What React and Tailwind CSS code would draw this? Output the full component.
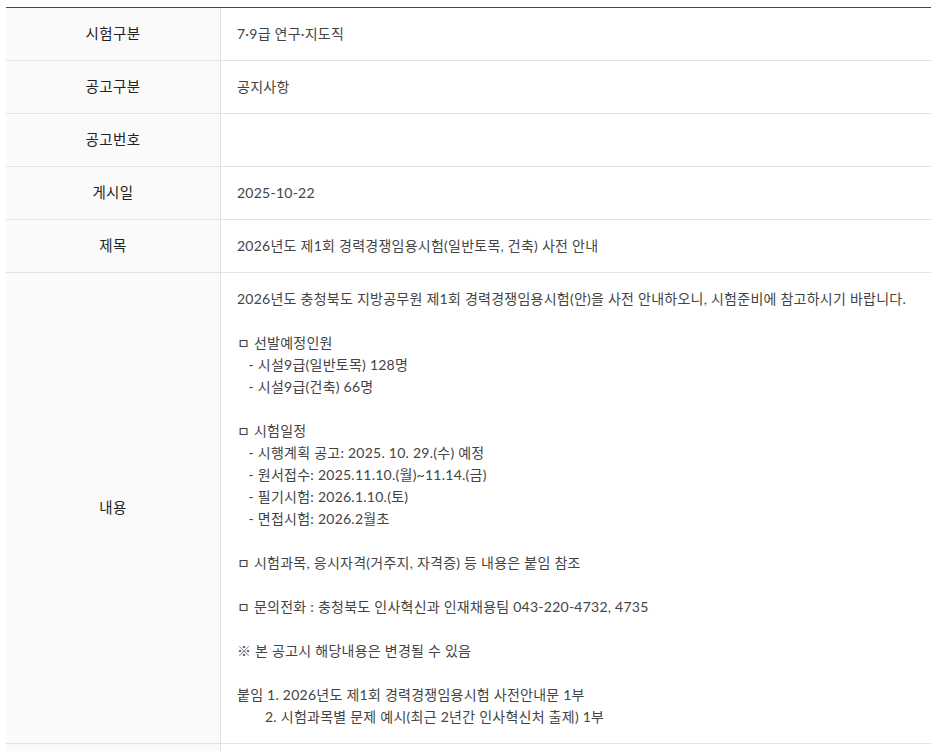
import React from "react";

const font = { fontFamily: "Lato, 'Noto Sans CJK KR', sans-serif" };

function Row({ label, children }) {
  return (
    <div className="grid grid-cols-[215px_1fr] border-b border-[#e2e2e2]">
      <div className="bg-[#fafafa] border-r border-[#e2e2e2] flex items-center justify-center text-[14.5px] font-normal tracking-[0.4px] text-[#222] leading-[22px] py-[15px]">
        {label}
      </div>
      <div className="pl-[16px] pr-[10px] py-[15px] text-[14px] tracking-[0.25px] text-[#444] leading-[22px]">
        {children}
      </div>
    </div>
  );
}

export default function App() {
  const lines = [
    "2026년도 충청북도 지방공무원 제1회 경력경쟁임용시험(안)을 사전 안내하오니, 시험준비에 참고하시기 바랍니다.",
    "",
    "ㅁ 선발예정인원",
    "   - 시설9급(일반토목) 128명",
    "   - 시설9급(건축) 66명",
    "",
    "ㅁ 시험일정",
    "   - 시행계획 공고: 2025. 10. 29.(수) 예정",
    "   - 원서접수: 2025.11.10.(월)~11.14.(금)",
    "   - 필기시험: 2026.1.10.(토)",
    "   - 면접시험: 2026.2월초",
    "",
    "ㅁ 시험과목, 응시자격(거주지, 자격증) 등 내용은 붙임 참조",
    "",
    "ㅁ 문의전화 : 충청북도 인사혁신과 인재채용팀 043-220-4732, 4735",
    "",
    "※ 본 공고시 해당내용은 변경될 수 있음",
    "",
    "붙임 1. 2026년도 제1회 경력경쟁임용시험 사전안내문 1부",
  ];
  return (
    <div className="w-[931px] h-[751px] overflow-hidden bg-white pl-[6px] pt-[7px]" style={font}>
      <div className="border-t border-[#1d5c44]">
        <Row label="시험구분">7·9급 연구·지도직</Row>
        <Row label="공고구분">공지사항</Row>
        <Row label="공고번호">{"\u00a0"}</Row>
        <Row label="게시일">2025-10-22</Row>
        <Row label="제목">2026년도 제1회 경력경쟁임용시험(일반토목, 건축) 사전 안내</Row>
        <Row label="내용">
          <div className="whitespace-pre">
            {lines.map((l, i) => (
              <div key={i} className="h-[22px]">{l}</div>
            ))}
            <div className="h-[22px] pl-[28px]">2. 시험과목별 문제 예시(최근 2년간 인사혁신처 출제) 1부</div>
          </div>
        </Row>
        <Row label={"\u00a0"}>{"\u00a0"}</Row>
      </div>
    </div>
  );
}
